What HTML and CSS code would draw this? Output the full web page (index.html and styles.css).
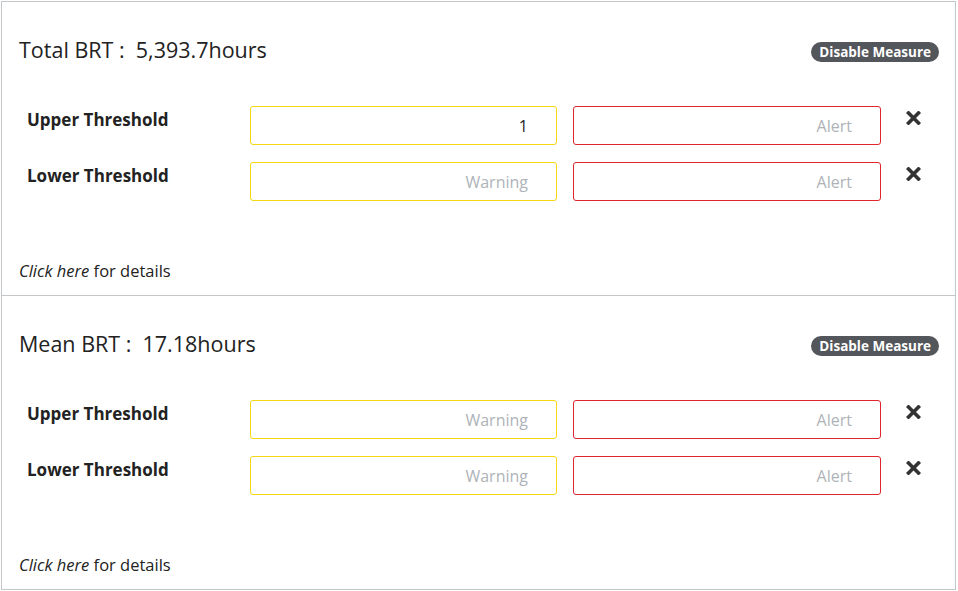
FILE: index.html
```html
<!DOCTYPE html>
<html>
<head>
<meta charset="utf-8">
<link rel="stylesheet" href="styles.css">
</head>
<body>
<div class="panel">
  <section class="measure">
    <div class="measure-head">
      <h2 class="measure-title">Total BRT :&nbsp; 5,393.7hours</h2>
      <span class="badge">Disable Measure</span>
    </div>
    <div class="rows">
      <div class="row">
        <div class="row-label">Upper Threshold</div>
        <div class="field warn"><span class="value">1</span></div>
        <div class="field alert"><span class="ph">Alert</span></div>
        <svg class="remove" viewBox="0 0 15 14" width="15" height="14"><path d="M2.5 2 L12.5 12 M12.5 2 L2.5 12" stroke="#333" stroke-width="3.6" stroke-linecap="square"/></svg>
      </div>
      <div class="row">
        <div class="row-label">Lower Threshold</div>
        <div class="field warn"><span class="ph">Warning</span></div>
        <div class="field alert"><span class="ph">Alert</span></div>
        <svg class="remove" viewBox="0 0 15 14" width="15" height="14"><path d="M2.5 2 L12.5 12 M12.5 2 L2.5 12" stroke="#333" stroke-width="3.6" stroke-linecap="square"/></svg>
      </div>
    </div>
    <p class="details"><em>Click here</em> for details</p>
  </section>
  <section class="measure">
    <div class="measure-head">
      <h2 class="measure-title">Mean BRT :&nbsp; 17.18hours</h2>
      <span class="badge">Disable Measure</span>
    </div>
    <div class="rows">
      <div class="row">
        <div class="row-label">Upper Threshold</div>
        <div class="field warn"><span class="ph">Warning</span></div>
        <div class="field alert"><span class="ph">Alert</span></div>
        <svg class="remove" viewBox="0 0 15 14" width="15" height="14"><path d="M2.5 2 L12.5 12 M12.5 2 L2.5 12" stroke="#333" stroke-width="3.6" stroke-linecap="square"/></svg>
      </div>
      <div class="row">
        <div class="row-label">Lower Threshold</div>
        <div class="field warn"><span class="ph">Warning</span></div>
        <div class="field alert"><span class="ph">Alert</span></div>
        <svg class="remove" viewBox="0 0 15 14" width="15" height="14"><path d="M2.5 2 L12.5 12 M12.5 2 L2.5 12" stroke="#333" stroke-width="3.6" stroke-linecap="square"/></svg>
      </div>
    </div>
    <p class="details"><em>Click here</em> for details</p>
  </section>
</div>
</body>
</html>
```
FILE: styles.css
```css
* { box-sizing: border-box; }
html, body { margin: 0; padding: 0; background: #fff; }
body {
  font-family: "Open Sans", "Noto Sans", sans-serif;
  color: #222;
}
.panel {
  margin: 1px 0 0 1px;
  width: 955px;
  height: 589px;
  border: 1px solid #c4c7c9;
  display: flex;
  flex-direction: column;
}
.measure {
  height: 293px;
  padding: 34px 16px 0 17px;
  display: flex;
  flex-direction: column;
}
.measure + .measure {
  border-top: 1px solid #c4c7c9;
  height: 294px;
}
.measure-head {
  display: flex;
  justify-content: space-between;
  align-items: center;
  height: 28px;
}
.measure-title {
  margin: 0;
  font-size: 21.5px;
  font-weight: 400;
  line-height: 28px;
}
.badge {
  background: #53565a;
  color: #fff;
  font-size: 13.5px;
  font-weight: 700;
  line-height: 20px;
  height: 20px;
  padding: 0 8px;
  border-radius: 10px;
  margin-top: 4px;
}
.rows {
  margin-top: 42px;
  display: flex;
  flex-direction: column;
  gap: 17px;
}
.row {
  display: flex;
  align-items: flex-start;
  height: 39px;
}
.row-label {
  width: 231px;
  padding-left: 8px;
  padding-top: 3px;
  font-size: 17px;
  font-weight: 700;
  line-height: 22px;
}
.field {
  height: 39px;
  border: 1px solid;
  border-radius: 3px;
  display: flex;
  align-items: center;
  justify-content: flex-end;
  padding-right: 28px;
  font-size: 16px;
}
.field.warn { width: 307px; border-color: #f7d612; }
.field.alert { width: 308px; margin-left: 16px; border-color: #e1252f; }
.ph { color: #aeb3b8; }
.value { color: #222; }
.remove { margin-left: 25px; margin-top: 5px; flex: none; }
.details {
  margin: 59px 0 0 0;
  font-size: 16.5px;
  line-height: 22px;
}
.details em { font-style: italic; }
```
